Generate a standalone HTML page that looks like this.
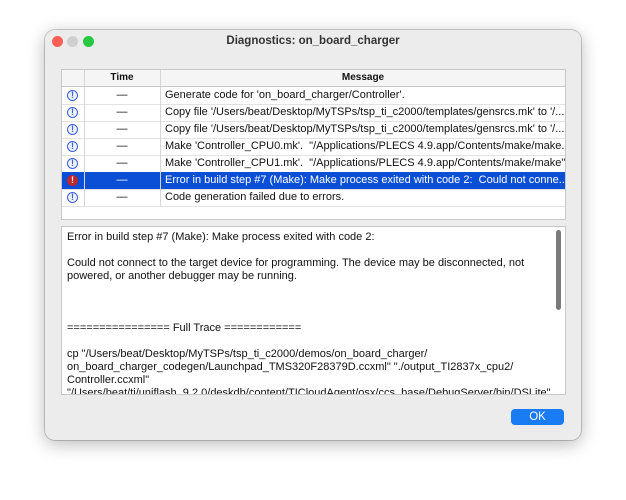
<!DOCTYPE html><html><head><style>
body{margin:0;width:626px;height:500px;background:#fff;font-family:"Liberation Sans",sans-serif;position:relative;overflow:hidden}
.win{position:absolute;left:45px;top:30px;width:536px;height:410px;background:#ececec;border-radius:10px;box-shadow:0 4px 18px rgba(0,0,0,.28),0 0 0 1px rgba(0,0,0,.18)}
.tb{position:absolute;left:0;top:0;width:536px;height:22px;text-align:center;font-size:11.5px;font-weight:bold;color:#333;line-height:22px}
.dot{position:absolute;top:6px;width:11px;height:11px;border-radius:50%}
.tbl{position:absolute;left:16px;top:39px;width:503px;height:149px;background:#fff;border:1px solid #c8c8c8;font-size:11px;color:#111}
.row{position:absolute;left:0;width:503px;height:17px;border-bottom:1px solid #e2e2e2;line-height:16px;white-space:nowrap;overflow:hidden}
.hdr{background:#f5f5f5;font-weight:bold;border-bottom:1px solid #c8c8c8;height:16px;font-size:10px}
.c1{position:absolute;left:0;width:22px;height:100%;border-right:1px solid #d6d6d6}
.c2{position:absolute;left:22px;width:76px;height:100%;border-right:1px solid #d6d6d6;text-align:center}
.c3{position:absolute;left:103px}
.ic{position:absolute;left:5px;top:3px;width:9px;height:9px;border:1.2px solid #3b5fd8;border-radius:50%;color:#3b5fd8;font-size:9px;line-height:9px;text-align:center;font-weight:bold;background:#eef2ff}
.sel{background:#0a4fd6;color:#fff}
.sel .ic{background:#c0272d;border-color:#c0272d;color:#fff}
.txt{position:absolute;left:16px;top:196px;width:503px;height:167px;background:#fff;border:1px solid #c8c8c8;font-size:11px;color:#111;line-height:13px;overflow:hidden}
.txt div{padding:4px 5px;white-space:pre}
.sb{position:absolute;left:494px;top:3px;width:5px;height:80px;background:#7a7a7a;border-radius:3px;padding:0!important}
.ok{position:absolute;left:466px;top:379px;width:53px;height:16px;background:#1a7cf5;border-radius:4px;color:#fff;font-size:11.5px;text-align:center;line-height:16px}
</style></head><body>
<div class="win">
<div class="dot" style="left:7px;background:#fe5f57"></div>
<div class="dot" style="left:22px;background:#d0d0d0"></div>
<div class="dot" style="left:38px;background:#28c840"></div>
<div class="tb">Diagnostics: on_board_charger</div>
<div class="tbl">
<div class="row hdr" style="top:0"><div class="c1"></div><div class="c2">Time</div><div class="c3" style="left:99px;width:404px;text-align:center">Message</div></div>
<div class="row" style="top:17px"><div class="c1"><div class="ic">!</div></div><div class="c2">—</div><div class="c3">Generate code for 'on_board_charger/Controller'.</div></div>
<div class="row" style="top:34px"><div class="c1"><div class="ic">!</div></div><div class="c2">—</div><div class="c3">Copy file '/Users/beat/Desktop/MyTSPs/tsp_ti_c2000/templates/gensrcs.mk' to '/...</div></div>
<div class="row" style="top:51px"><div class="c1"><div class="ic">!</div></div><div class="c2">—</div><div class="c3">Copy file '/Users/beat/Desktop/MyTSPs/tsp_ti_c2000/templates/gensrcs.mk' to '/...</div></div>
<div class="row" style="top:68px"><div class="c1"><div class="ic">!</div></div><div class="c2">—</div><div class="c3">Make 'Controller_CPU0.mk'.&nbsp; "/Applications/PLECS 4.9.app/Contents/make/make...</div></div>
<div class="row" style="top:85px"><div class="c1"><div class="ic">!</div></div><div class="c2">—</div><div class="c3">Make 'Controller_CPU1.mk'.&nbsp; "/Applications/PLECS 4.9.app/Contents/make/make"...</div></div>
<div class="row sel" style="top:102px"><div class="c1"><div class="ic">!</div></div><div class="c2">—</div><div class="c3">Error in build step #7 (Make): Make process exited with code 2:&nbsp; Could not conne...</div></div>
<div class="row" style="top:119px"><div class="c1"><div class="ic">!</div></div><div class="c2">—</div><div class="c3">Code generation failed due to errors.</div></div>
</div>
<div class="txt"><div>Error in build step #7 (Make): Make process exited with code 2:

Could not connect to the target device for programming. The device may be disconnected, not
powered, or another debugger may be running.



================ Full Trace ============

cp "/Users/beat/Desktop/MyTSPs/tsp_ti_c2000/demos/on_board_charger/
on_board_charger_codegen/Launchpad_TMS320F28379D.ccxml" "./output_TI2837x_cpu2/
Controller.ccxml"
"/Users/beat/ti/uniflash_9.2.0/deskdb/content/TICloudAgent/osx/ccs_base/DebugServer/bin/DSLite"</div><div class="sb"></div></div>
<div class="ok">OK</div>
</div>
</body></html>
